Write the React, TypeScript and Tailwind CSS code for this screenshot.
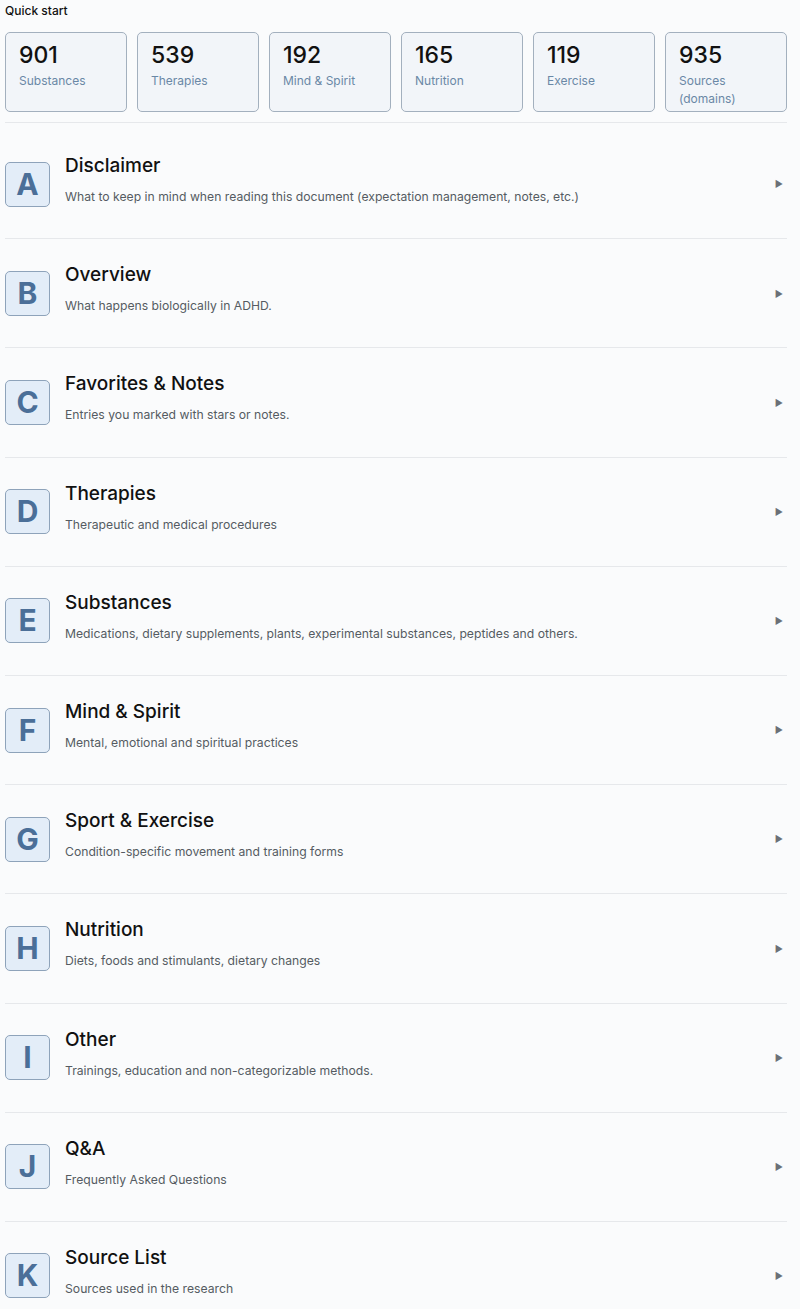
const stats = [
  { value: "901", label: "Substances" },
  { value: "539", label: "Therapies" },
  { value: "192", label: "Mind & Spirit" },
  { value: "165", label: "Nutrition" },
  { value: "119", label: "Exercise" },
  { value: "935", label: "Sources (domains)" },
];

const sections = [
  { letter: "A", title: "Disclaimer", text: "What to keep in mind when reading this document (expectation management, notes, etc.)" },
  { letter: "B", title: "Overview", text: "What happens biologically in ADHD." },
  { letter: "C", title: "Favorites & Notes", text: "Entries you marked with stars or notes." },
  { letter: "D", title: "Therapies", text: "Therapeutic and medical procedures" },
  { letter: "E", title: "Substances", text: "Medications, dietary supplements, plants, experimental substances, peptides and others." },
  { letter: "F", title: "Mind & Spirit", text: "Mental, emotional and spiritual practices" },
  { letter: "G", title: "Sport & Exercise", text: "Condition-specific movement and training forms" },
  { letter: "H", title: "Nutrition", text: "Diets, foods and stimulants, dietary changes" },
  { letter: "I", title: "Other", text: "Trainings, education and non-categorizable methods." },
  { letter: "J", title: "Q&A", text: "Frequently Asked Questions" },
  { letter: "K", title: "Source List", text: "Sources used in the research" },
];

const StatCard = ({ value, label }: { value: string; label: string }) => (
  <div className="h-[80px] w-[122px] rounded-[5px] border border-[#a3b0be] bg-[#f2f5f9] pl-[13px] pr-2 pt-[8px]">
    <div className="text-[23px] leading-[28px] font-medium text-[#111]">{value}</div>
    <div className="mt-[3px] w-[90px] text-[12px] leading-[18px] text-[#6a88a6]">{label}</div>
  </div>
);

const SectionRow = ({ letter, title, text }: { letter: string; title: string; text: string }) => (
  <button className="flex h-[109.2px] w-full items-center border-b border-[#e6e8eb] text-left">
    <div className="flex h-[45px] w-[45px] shrink-0 items-center justify-center rounded-[5px] border border-[#8ea3ba] bg-[#e3edf8] text-[30px] font-bold text-[#4b6f98]">
      {letter}
    </div>
    <div className="ml-[15px] mb-[9px] flex-1">
      <div className="text-[19px] leading-[26px] font-medium text-[#111]">{title}</div>
      <div className="mt-[9px] text-[12.2px] leading-[18px] text-[#555b62]">{text}</div>
    </div>
    <span className="mr-[4px] text-[9px] text-[#6b7077]">▶</span>
  </button>
);

export default function App() {
  return (
    <div
      className="min-h-screen bg-[#fafbfc] pl-[5px] pr-[13px]"
      style={{ fontFamily: "Inter, 'Noto Sans', sans-serif" }}
    >
      <div className="border-b border-[#e6e8eb] pb-[10px]">
        <div className="pt-[3px] text-[12px] leading-[16px] font-medium text-[#111]">Quick start</div>
        <div className="mt-[13px] flex gap-[10px]">
          {stats.map((s) => (
            <StatCard key={s.value} value={s.value} label={s.label} />
          ))}
        </div>
      </div>
      <div className="pt-[7px]">
        {sections.map((s) => (
          <SectionRow key={s.letter} letter={s.letter} title={s.title} text={s.text} />
        ))}
      </div>
    </div>
  );
}
